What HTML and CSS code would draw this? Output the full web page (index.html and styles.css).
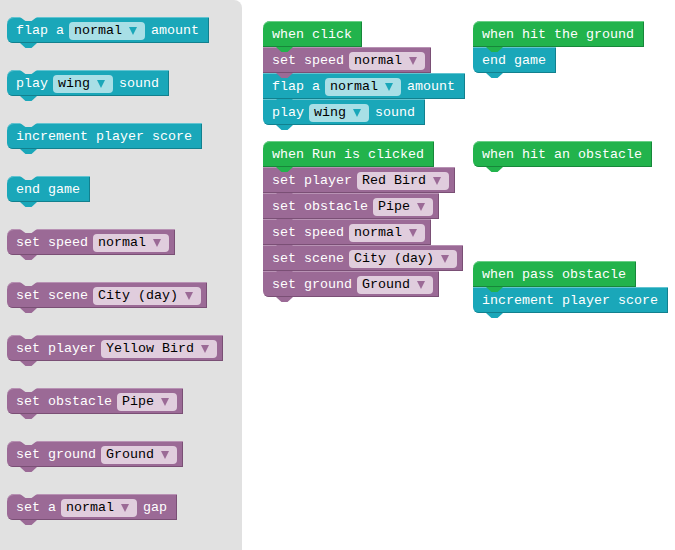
FILE: index.html
```html
<!DOCTYPE html>
<html>
<head>
<meta charset="utf-8">
<link rel="stylesheet" href="styles.css">
</head>
<body>
<div class="page">
  <aside class="toolbox">
    <div class="block teal solo"><span class="label">flap a</span><span class="field">normal<i class="arrow"></i></span><span class="label end">amount</span></div>
    <div class="block teal solo"><span class="label">play</span><span class="field">wing<i class="arrow"></i></span><span class="label end">sound</span></div>
    <div class="block teal solo"><span class="label end">increment player score</span></div>
    <div class="block teal solo"><span class="label end">end game</span></div>
    <div class="block purple solo"><span class="label">set speed</span><span class="field">normal<i class="arrow"></i></span></div>
    <div class="block purple solo"><span class="label">set scene</span><span class="field">City (day)<i class="arrow"></i></span></div>
    <div class="block purple solo"><span class="label">set player</span><span class="field">Yellow Bird<i class="arrow"></i></span></div>
    <div class="block purple solo"><span class="label">set obstacle</span><span class="field">Pipe<i class="arrow"></i></span></div>
    <div class="block purple solo"><span class="label">set ground</span><span class="field">Ground<i class="arrow"></i></span></div>
    <div class="block purple solo"><span class="label">set a</span><span class="field">normal<i class="arrow"></i></span><span class="label end">gap</span></div>
  </aside>
  <main class="workspace">
    <div class="stack s1">
      <div class="block green hat"><span class="label end">when click</span></div>
      <div class="block purple"><span class="label">set speed</span><span class="field">normal<i class="arrow"></i></span></div>
      <div class="block teal"><span class="label">flap a</span><span class="field">normal<i class="arrow"></i></span><span class="label end">amount</span></div>
      <div class="block teal"><span class="label">play</span><span class="field">wing<i class="arrow"></i></span><span class="label end">sound</span></div>
    </div>
    <div class="stack s2">
      <div class="block green hat"><span class="label end">when hit the ground</span></div>
      <div class="block teal"><span class="label end">end game</span></div>
    </div>
    <div class="stack s3">
      <div class="block green hat"><span class="label end">when Run is clicked</span></div>
      <div class="block purple"><span class="label">set player</span><span class="field">Red Bird<i class="arrow"></i></span></div>
      <div class="block purple"><span class="label">set obstacle</span><span class="field">Pipe<i class="arrow"></i></span></div>
      <div class="block purple"><span class="label">set speed</span><span class="field">normal<i class="arrow"></i></span></div>
      <div class="block purple"><span class="label">set scene</span><span class="field">City (day)<i class="arrow"></i></span></div>
      <div class="block purple"><span class="label">set ground</span><span class="field">Ground<i class="arrow"></i></span></div>
    </div>
    <div class="stack s4">
      <div class="block green hat"><span class="label end">when hit an obstacle</span></div>
    </div>
    <div class="stack s5">
      <div class="block green hat"><span class="label end">when pass obstacle</span></div>
      <div class="block teal"><span class="label end">increment player score</span></div>
    </div>
  </main>
</div>
</body>
</html>
```

FILE: styles.css
```css
html, body {
  margin: 0;
  padding: 0;
  background: #ffffff;
}

.page {
  display: flex;
  width: 675px;
  height: 550px;
  overflow: hidden;
  font-family: "Liberation Mono", "DejaVu Sans Mono", monospace;
  font-size: 13.33px;
}

.toolbox {
  --bg: #e1e1e1;
  width: 242px;
  flex: none;
  background: var(--bg);
  border-top-right-radius: 8px;
  box-sizing: border-box;
  padding: 17px 0 0 7px;
  display: flex;
  flex-direction: column;
  align-items: flex-start;
  gap: 27px;
}

.workspace {
  --bg: #ffffff;
  flex: 1;
  position: relative;
  background: var(--bg);
}

.stack {
  position: absolute;
  display: flex;
  flex-direction: column;
  align-items: flex-start;
}

.s1 { left: 21px; top: 21px; }
.s2 { left: 231px; top: 21px; }
.s3 { left: 21px; top: 141px; }
.s4 { left: 231px; top: 141px; }
.s5 { left: 231px; top: 261px; }

.block {
  --c: #1aa7b9;
  --fc: #a8dfe6;
  --dk: #12808e;
  --lt: #6cc8d4;
  position: relative;
  display: flex;
  align-items: center;
  gap: 5px;
  height: 26px;
  box-sizing: border-box;
  padding: 1px 6px 0 9px;
  background: var(--c);
  color: #ffffff;
  box-shadow: inset 0 1px 0 var(--lt), inset -1px -1px 0 var(--dk);
}

.teal {
  --c: #1aa7b9;
  --fc: #a8dfe6;
  --dk: #12808e;
  --lt: #62c4d1;
}

.purple {
  --c: #9b6a96;
  --fc: #e0cddd;
  --dk: #7a4f75;
  --lt: #b892b4;
}

.green {
  --c: #22b34c;
  --fc: #a8e0b8;
  --dk: #17873a;
  --lt: #6acf86;
}

.stack .block:first-child,
.block.solo {
  border-top-left-radius: 7px;
}

.stack .block:last-child,
.block.solo {
  border-bottom-left-radius: 6px;
}

/* bottom connection tab */
.block::after {
  content: "";
  position: absolute;
  left: 13px;
  bottom: -5px;
  width: 17px;
  height: 5px;
  background: var(--c);
  clip-path: polygon(0 0, 100% 0, 68% 100%, 32% 100%);
  z-index: 2;
}

/* top notch on unconnected statement blocks */
.block.solo::before {
  content: "";
  position: absolute;
  left: 13px;
  top: 0;
  width: 17px;
  height: 4px;
  background: var(--bg);
  clip-path: polygon(0 0, 100% 0, 68% 100%, 32% 100%);
}

.label {
  white-space: pre;
  line-height: 18px;
}

.label.end {
  margin-right: 4px;
}

.field + .label {
  margin-left: 1px;
}

.field {
  display: inline-flex;
  align-items: center;
  gap: 7px;
  height: 18px;
  line-height: 18px;
  padding: 0 8px 0 5px;
  border-radius: 4px;
  background: var(--fc);
  color: #000000;
  white-space: pre;
}

.arrow {
  display: block;
  width: 0;
  height: 0;
  border-left: 4.5px solid transparent;
  border-right: 4.5px solid transparent;
  border-top: 8px solid var(--c);
}
```
